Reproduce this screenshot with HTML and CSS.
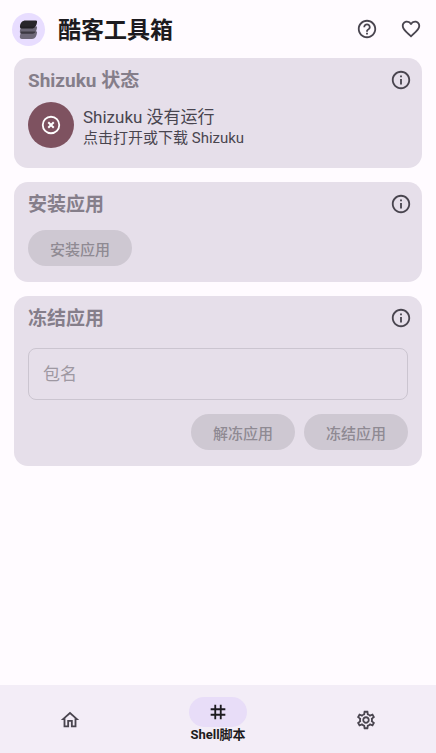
FILE: index.html
```html
<!DOCTYPE html>
<html lang="zh-CN">
<head>
<meta charset="utf-8">
<meta name="viewport" content="width=device-width, initial-scale=1">
<title>酷客工具箱</title>
<link rel="stylesheet" href="styles.css">
</head>
<body>
<svg class="defs" aria-hidden="true">
  <symbol id="info" viewBox="0 0 24 24"><path d="M11 7h2v2h-2zm0 4h2v6h-2zm1-9C6.480 2 2 6.480 2 12s4.480 10 10 10 10-4.480 10-10S17.520 2 12 2zm0 18c-4.410 0-8-3.590-8-8s3.590-8 8-8 8 3.590 8 8-3.590 8-8 8z"/></symbol>
</svg>
<header class="top-bar">
  <span class="logo">
    <svg viewBox="0 0 33 33" aria-hidden="true">
      <path fill="#1d1b20" opacity=".6" d="M9 18.500H25c0 4.500-2 7.500-5 7.500H10c-2 0-2.500-1.500-2-3.500z"/>
      <path fill="#1d1b20" opacity=".62" d="M9 13.500H25c0 4.500-2 7.300-5 7.300H10c-2 0-2.500-1.500-2-3.500z"/>
      <path fill="#1d1b20" opacity=".95" d="M13.500 7.500H24c1 0 1.200.8 1 2-.5 3.600-2.500 6-5 6H9.500c-1.300 0-1.700-1-1.500-2.500.4-3.300 2.500-5.500 5.500-5.500z"/>
    </svg>
  </span>
  <h1>酷客工具箱</h1>
  <button class="icon-button" aria-label="帮助"><svg class="icon" viewBox="0 0 24 24"><path d="M11 18h2v-2h-2v2zm1-16C6.480 2 2 6.480 2 12s4.480 10 10 10 10-4.480 10-10S17.520 2 12 2zm0 18c-4.410 0-8-3.590-8-8s3.590-8 8-8 8 3.590 8 8-3.590 8-8 8zm0-14c-2.210 0-4 1.790-4 4h2c0-1.100.9-2 2-2s2 .9 2 2c0 2-3 1.750-3 5h2c0-2.250 3-2.500 3-5 0-2.210-1.790-4-4-4z"/></svg></button>
  <button class="icon-button" aria-label="支持"><svg class="icon" viewBox="0 0 24 24"><path d="M16.500 3c-1.740 0-3.410.81-4.500 2.090C10.910 3.810 9.240 3 7.500 3 4.420 3 2 5.420 2 8.500c0 3.780 3.400 6.860 8.550 11.540L12 21.350l1.450-1.320C18.600 15.360 22 12.280 22 8.500 22 5.420 19.580 3 16.500 3zm-4.400 15.550l-.1.1-.1-.1C7.140 14.240 4 11.390 4 8.500 4 6.500 5.500 5 7.500 5c1.540 0 3.040.99 3.570 2.360h1.870C13.460 5.990 14.960 5 16.500 5c2 0 3.500 1.500 3.500 3.500 0 2.890-3.140 5.740-7.900 10.050z"/></svg></button>
</header>
<main class="content">
  <section class="card">
    <div class="card-head"><h2>Shizuku 状态</h2><button class="icon-button" aria-label="Shizuku 说明"><svg class="icon"><use href="#info"/></svg></button></div>
    <button class="status">
      <span class="status-badge"><svg class="icon" viewBox="0 0 24 24"><circle cx="12" cy="12" r="9" fill="none" stroke="currentColor" stroke-width="2"/><path d="M9 9l6 6M15 9l-6 6" stroke="currentColor" stroke-width="2.200"/></svg></span>
      <span class="status-text"><span class="status-title">Shizuku 没有运行</span><span class="status-hint">点击打开或下载 Shizuku</span></span>
    </button>
  </section>
  <section class="card">
    <div class="card-head"><h2>安装应用</h2><button class="icon-button" aria-label="安装说明"><svg class="icon"><use href="#info"/></svg></button></div>
    <div class="actions"><button class="pill" disabled>安装应用</button></div>
  </section>
  <section class="card">
    <div class="card-head"><h2>冻结应用</h2><button class="icon-button" aria-label="冻结说明"><svg class="icon"><use href="#info"/></svg></button></div>
    <input class="field" type="text" placeholder="包名" aria-label="包名" disabled>
    <div class="actions actions-end"><button class="pill" disabled>解冻应用</button><button class="pill" disabled>冻结应用</button></div>
  </section>
</main>
<nav class="nav">
  <a href="#home" class="nav-item" aria-label="主页"><svg class="icon" viewBox="0 0 24 24"><path d="M12 5.690l5 4.500V18h-2v-6H9v6H7v-7.810l5-4.500M12 3L2 12h3v8h6v-6h2v6h6v-8h3L12 3z"/></svg></a>
  <a href="#shell" class="nav-item" aria-current="page"><span class="indicator"><svg class="icon" viewBox="0 0 24 24"><path d="M20 10V8h-4V4h-2v4h-4V4H8v4H4v2h4v4H4v2h4v4h2v-4h4v4h2v-4h4v-2h-4v-4h4zm-6 4h-4v-4h4v4z"/></svg></span><span class="nav-label">Shell脚本</span></a>
  <a href="#settings" class="nav-item" aria-label="设置"><svg class="icon" viewBox="0 0 24 24"><path d="M19.430 12.980c.04-.32.07-.64.07-.98 0-.34-.03-.66-.07-.98l2.110-1.650c.19-.15.24-.42.12-.64l-2-3.460c-.09-.16-.26-.25-.44-.25-.06 0-.12.01-.17.03l-2.490 1c-.52-.4-1.080-.73-1.690-.98l-.38-2.650C14.460 2.180 14.250 2 14 2h-4c-.25 0-.46.18-.49.42l-.38 2.650c-.61.25-1.170.59-1.690.98l-2.490-1c-.06-.02-.12-.03-.18-.03-.17 0-.34.09-.43.25l-2 3.460c-.13.22-.07.49.12.64l2.110 1.650c-.04.32-.07.65-.07.98 0 .33.03.66.07.98l-2.110 1.650c-.19.15-.24.42-.12.64l2 3.460c.09.16.26.25.44.25.06 0 .12-.01.17-.03l2.490-1c.52.4 1.080.73 1.690.98l.38 2.650c.03.24.24.42.49.42h4c.25 0 .46-.18.49-.42l.38-2.650c.61-.25 1.170-.59 1.690-.98l2.490 1c.06.02.12.03.18.03.17 0 .34-.09.43-.25l2-3.460c.12-.22.07-.49-.12-.64l-2.110-1.650zm-1.980-1.710c.04.31.05.52.05.73 0 .21-.02.43-.05.73l-.14 1.130.89.7 1.080.84-.7 1.210-1.270-.51-1.040-.42-.9.68c-.43.32-.84.56-1.250.73l-1.060.43-.16 1.130-.2 1.350h-1.400l-.19-1.350-.16-1.130-1.060-.43c-.43-.18-.83-.41-1.230-.71l-.91-.7-1.060.43-1.270.51-.7-1.210 1.080-.84.89-.7-.14-1.130c-.03-.31-.05-.54-.05-.74s.02-.43.05-.73l.14-1.130-.89-.7-1.080-.84.7-1.210 1.270.51 1.040.42.9-.68c.43-.32.84-.56 1.250-.73l1.060-.43.16-1.130.2-1.350h1.390l.19 1.350.16 1.130 1.060.43c.43.18.83.41 1.230.71l.91.7 1.060-.43 1.270-.51.7 1.210-1.070.85-.89.7.14 1.130zM12 8c-2.210 0-4 1.790-4 4s1.790 4 4 4 4-1.790 4-4-1.790-4-4-4zm0 6c-1.100 0-2-.9-2-2s.9-2 2-2 2 .9 2 2-.9 2-2 2z"/></svg></a>
</nav>
</body>
</html>
```
FILE: styles.css
```css
* { box-sizing: border-box; }

body {
  margin: 0;
  min-height: 100vh;
  display: flex;
  flex-direction: column;
  background: #fffbff;
  color: #1d1b20;
  font-family: Roboto, "Noto Sans CJK SC", sans-serif;
}

h1, h2 { margin: 0; }

button {
  border: 0;
  padding: 0;
  background: none;
  color: inherit;
  font-family: inherit;
}

.defs { display: none; }

.icon {
  display: block;
  width: 22px;
  height: 22px;
  fill: currentColor;
}

.icon-button { color: #49454f; }

.top-bar {
  display: flex;
  align-items: center;
  gap: 22px;
  height: 58px;
  padding: 0 14px 0 12px;
}

.logo {
  width: 33px;
  height: 33px;
  margin-right: -9px;
  border-radius: 50%;
  background: #e8ddff;
}

.logo svg { display: block; }

h1 {
  flex: 1;
  padding-top: 4px;
  font-size: 23px;
  font-weight: 700;
  line-height: 30px;
}

.content {
  flex: 1;
  display: flex;
  flex-direction: column;
  gap: 14px;
  padding: 0 14px;
}

.card {
  padding: 10px 14px 16px;
  border-radius: 14px;
  background: #e6dfea;
}

.card-head {
  display: flex;
  align-items: center;
  justify-content: space-between;
  margin-right: -4px;
}

h2 {
  padding-top: 2px;
  color: #857e8a;
  font-size: 19px;
  font-weight: 700;
  line-height: 22px;
}

.status {
  display: flex;
  align-items: center;
  gap: 9px;
  width: 100%;
  margin-top: 10px;
  padding-bottom: 4px;
  color: #49454f;
  text-align: left;
}

.status-badge {
  display: grid;
  place-items: center;
  width: 46px;
  height: 46px;
  border-radius: 50%;
  background: #7e5260;
  color: #fff;
}

.status-text {
  display: flex;
  flex-direction: column;
  padding-top: 4px;
}

.status-title {
  font-size: 17px;
  line-height: 22px;
}

.status-hint {
  font-size: 15px;
  line-height: 20px;
}

.actions {
  display: flex;
  gap: 9px;
  margin-top: 14px;
}

.actions-end { justify-content: flex-end; }

.pill {
  height: 36px;
  padding: 0 22px;
  border-radius: 18px;
  background: #cec8d2;
  color: #8f8a93;
  font-size: 15px;
  font-weight: 500;
}

.field {
  display: block;
  width: 100%;
  height: 52px;
  margin-top: 18px;
  padding: 0 14px;
  border: 1px solid #cbc5d0;
  border-radius: 8px;
  background: none;
  color: #49454f;
  font-family: inherit;
  font-size: 17px;
}

.field::placeholder { color: #9e98a2; }

.nav {
  display: grid;
  grid-template-columns: repeat(3, 1fr);
  gap: 8px;
  height: 68px;
  padding-top: 2px;
  background: #f3edf7;
}

.nav-item {
  display: flex;
  flex-direction: column;
  align-items: center;
  justify-content: center;
  color: #49454f;
  text-decoration: none;
}

.nav-item[aria-current] { color: #1d1b20; }

.indicator {
  display: grid;
  place-items: center;
  width: 58px;
  height: 30px;
  border-radius: 15px;
  background: #e8ddf8;
}

.nav-label {
  font-size: 13px;
  font-weight: 700;
  line-height: 16px;
}
```
